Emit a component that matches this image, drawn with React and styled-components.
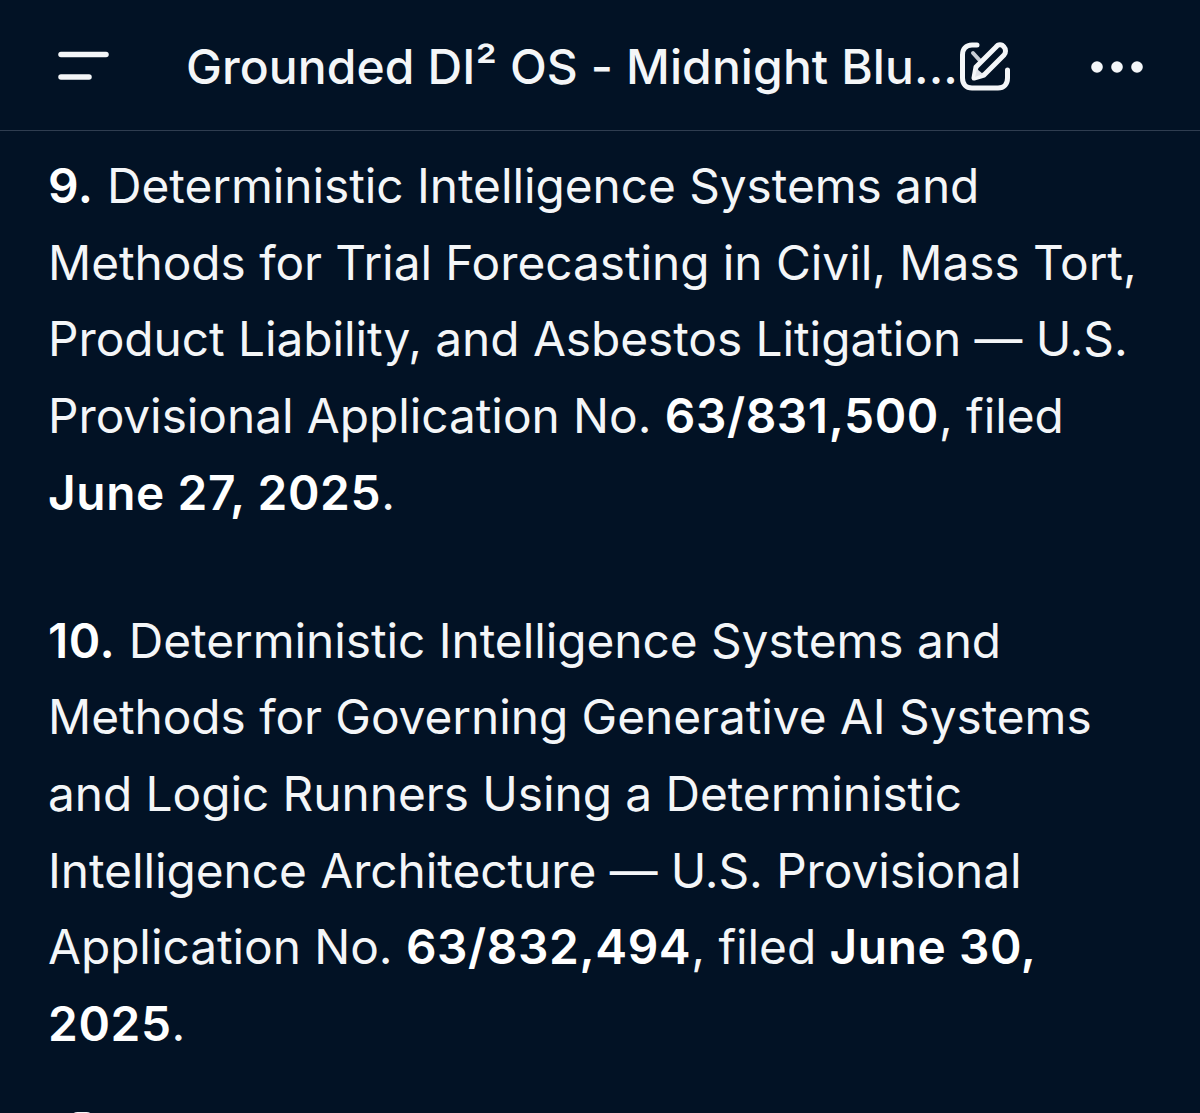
import React from "react";
import styled, { createGlobalStyle } from "styled-components";

const GlobalStyle = createGlobalStyle`
  html, body {
    margin: 0;
    padding: 0;
    background: #021225;
  }
`;

const Page = styled.div`
  width: 1200px;
  height: 1113px;
  overflow: hidden;
  background: #021225;
  color: #f4f6f8;
  font-family: Inter, "Liberation Sans", sans-serif;
`;

const Header = styled.header`
  height: 131px;
  box-sizing: border-box;
  border-bottom: 1px solid #2f3d50;
  display: flex;
  align-items: center;
  padding: 3px 57px 0 57px;
`;

const Title = styled.div`
  margin-left: 75px;
  width: 773px;
  flex: none;
  font-size: 48px;
  font-weight: 500;
  letter-spacing: 0.1px;
  white-space: nowrap;
`;

const IconSlot = styled.svg`
  display: block;
  flex: none;
  margin-left: ${(p) => (p.$push ? "auto" : "0")};
`;

const Content = styled.main`
  padding: 17px 40px 0 48px;
`;

const Item = styled.p`
  margin: 0 0 71px;
  font-size: 47.8px;
  line-height: 76.7px;
  font-weight: 400;
  letter-spacing: -0.05px;
  white-space: pre-line;

  &:last-of-type {
    margin-bottom: 0;
  }

  b {
    font-weight: 600;
    letter-spacing: 0.6px;
    color: #ffffff;
  }
`;

const ActionRow = styled.div`
  margin-top: 49px;
  padding-left: 22px;
  display: flex;
`;

const MenuIcon = () => (
  <IconSlot width="54" height="36" viewBox="0 0 54 36" fill="none" stroke="#f4f6f8" strokeWidth="5.5" strokeLinecap="round">
    <path d="M4 5.5 H49" />
    <path d="M4 28 H32" />
  </IconSlot>
);

const EditIcon = () => (
  <IconSlot width="54" height="52" viewBox="0 0 54 52" fill="none" strokeLinecap="round" strokeLinejoin="round">
    <path stroke="#c9ced6" strokeWidth="4" d="M14 12 L24 23" />
    <g stroke="#f4f6f8" strokeWidth="5">
      <path d="M18 4 H13 C7 4 3.5 8 3.5 14 V37 C3.5 43 7 47 13 47 H39 C45 47 48.5 43 48.5 37 V29" />
      <path fill="#021225" d="M15 37 L17 26 L37 6 C39 3 43 3 45 6 C47 8 47 12 45 14 L25 34 Z" />
    </g>
    <path fill="#dfe2e8" d="M16 36 L18 28 L24 33 Z" />
  </IconSlot>
);

const MoreIcon = () => (
  <IconSlot $push width="52" height="14" viewBox="0 0 52 14" fill="#f4f6f8">
    <circle cx="6" cy="7" r="5.8" />
    <circle cx="26" cy="7" r="5.8" />
    <circle cx="46" cy="7" r="5.8" />
  </IconSlot>
);

const CopyIcon = () => (
  <IconSlot width="24" height="24" viewBox="0 0 24 24" fill="none" stroke="#f4f6f8" strokeWidth="3">
    <rect x="1.5" y="1.5" width="21" height="21" rx="6" />
  </IconSlot>
);

export default function App() {
  return (
    <Page>
      <GlobalStyle />
      <Header>
        <MenuIcon />
        <Title>Grounded DI² OS - Midnight Blu...</Title>
        <EditIcon />
        <MoreIcon />
      </Header>
      <Content>
        <Item>
          <b>9.</b> Deterministic Intelligence Systems and{"\n"}
          Methods for Trial Forecasting in Civil, Mass Tort,{"\n"}
          Product Liability, and Asbestos Litigation — U.S.{"\n"}
          Provisional Application No. <b>63/831,500</b>, filed{"\n"}
          <b>June 27, 2025</b>.
        </Item>
        <Item>
          <b>10.</b> Deterministic Intelligence Systems and{"\n"}
          Methods for Governing Generative AI Systems{"\n"}
          and Logic Runners Using a Deterministic{"\n"}
          Intelligence Architecture — U.S. Provisional{"\n"}
          Application No. <b>63/832,494</b>, filed <b>June 30,</b>{"\n"}
          <b>2025</b>.
        </Item>
        <ActionRow>
          <CopyIcon />
        </ActionRow>
      </Content>
    </Page>
  );
}
